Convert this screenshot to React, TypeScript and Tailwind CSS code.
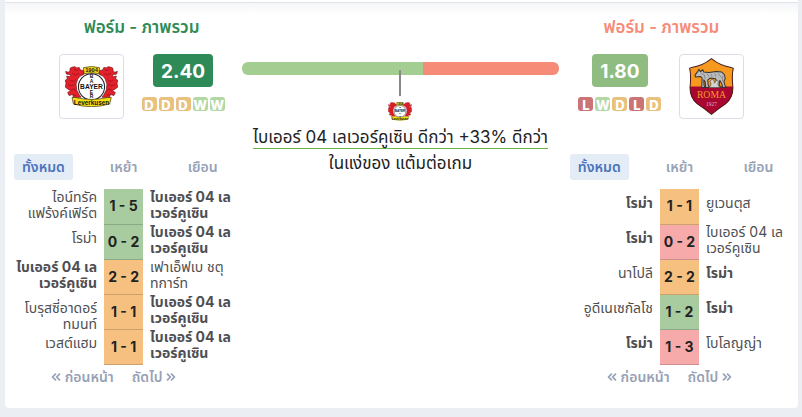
import React, { useState } from "react";
import { ChevronsLeft, ChevronsRight } from "lucide-react";
import { clsx } from "clsx";

type Result = "W" | "D" | "L";

interface Match {
  home: string;
  away: string;
  score: string;
  result: Result;
  strong?: "home" | "away";
  clipped?: boolean;
}

interface Team {
  title: string;
  titleClass: string;
  points: string;
  pointsClass: string;
  form: Result[];
  matches: Match[];
}

const LEV = "ไบเออร์ 04 เล\nเวอร์คูเซิน";

const leverkusen: Team = {
  title: "ฟอร์ม - ภาพรวม",
  titleClass: "text-[#2e8b57]",
  points: "2.40",
  pointsClass: "bg-[#2e8b57]",
  form: ["D", "D", "D", "W", "W"],
  matches: [
    { home: "ไอน์ทรัค\nแฟร้งค์เฟิร์ต", away: LEV, score: "1 - 5", result: "W", strong: "away" },
    { home: "โรม่า", away: LEV, score: "0 - 2", result: "W", strong: "away" },
    { home: LEV, away: "เฟาเอ็ฟเบ ชตุ\nทการ์ท", score: "2 - 2", result: "D", strong: "home" },
    { home: "โบรุสซี่อาดอร์\nทมนท์", away: LEV, score: "1 - 1", result: "D", strong: "away", clipped: true },
    { home: "เวสต์แฮม", away: LEV, score: "1 - 1", result: "D", strong: "away" },
  ],
};

const roma: Team = {
  title: "ฟอร์ม - ภาพรวม",
  titleClass: "text-[#f68b77]",
  points: "1.80",
  pointsClass: "bg-[#8fbc80]",
  form: ["L", "W", "D", "L", "D"],
  matches: [
    { home: "โรม่า", away: "ยูเวนตุส", score: "1 - 1", result: "D", strong: "home" },
    { home: "โรม่า", away: LEV, score: "0 - 2", result: "L", strong: "home" },
    { home: "นาโปลี", away: "โรม่า", score: "2 - 2", result: "D", strong: "away" },
    { home: "อูดีเนเซกัลโช", away: "โรม่า", score: "1 - 2", result: "W", strong: "away" },
    { home: "โรม่า", away: "โบโลญญ่า", score: "1 - 3", result: "L", strong: "home" },
  ],
};

const formColors: Record<Result, string> = {
  W: "bg-[#b3d8a4]",
  D: "bg-[#e9c07e]",
  L: "bg-[#cb7476]",
};

const scoreColors: Record<Result, string> = {
  W: "bg-[#a8cb9f] border-[#8caa85]",
  D: "bg-[#f6c180] border-[#cda16b]",
  L: "bg-[#f6abaa] border-[#cd8f8e]",
};

function Lion() {
  return (
    <g>
      <path
        d="M20 4 L29 2 L36 6 L42 4 L46 12 L57 14 L56 25 L45 30 L38 39 L33 54 L35 72 L42 85 L48 93 L25 94 L23 85 L12 88 L8 79 L17 73 L9 69 L1 63 L3 51 L0 43 L7 39 L5 30 L14 32 L17 26 L4 24 L2 16 L9 19 L15 15 L15 7 Z"
        fill="#e4202b"
        stroke="#721319"
        strokeWidth="2"
      />
      <path
        d="M26 10 L33 13 L40 12 M21 21 L31 27 L42 22 M14 42 L24 46 L32 40 M9 56 L20 59 L29 54 M18 73 L27 68 L34 76 M24 85 L33 88"
        fill="none"
        stroke="#85151c"
        strokeWidth="2"
      />
    </g>
  );
}

function LeverkusenLogo({ className }: { className?: string }) {
  return (
    <svg viewBox="0 0 158 123" className={className} role="img" aria-label="ไบเออร์ 04 เลเวอร์คูเซิน">
      <Lion />
      <g transform="translate(158 0) scale(-1 1)">
        <Lion />
      </g>
      <circle cx="79" cy="62" r="39" fill="#fff" stroke="#1a1a1a" strokeWidth="3" />
      <path d="M55 5 Q79 -2 103 5 L101 23 Q79 17 57 23 Z" fill="#f8df16" stroke="#3a3200" strokeWidth="2" />
      <path d="M21 94 L31 94 Q79 105 127 94 L138 94 L133 113 Q79 130 25 113 Z" fill="#f8df16" stroke="#3a3200" strokeWidth="2" />
      <g fontFamily="Liberation Sans, sans-serif" fontWeight="bold" textAnchor="middle" fill="#111">
        <text x="79" y="17" fontSize="17">1904</text>
        <text x="79" y="68" fontSize="20">BAYER</text>
        <text x="79" y="37" fontSize="15">B</text>
        <text x="79" y="51" fontSize="15">A</text>
        <text x="79" y="82" fontSize="15">E</text>
        <text x="79" y="96" fontSize="15">R</text>
        <text x="79" y="116" fontSize="19">Leverkusen</text>
      </g>
    </svg>
  );
}

function RomaLogo({ className }: { className?: string }) {
  return (
    <svg viewBox="0 0 134 170" className={className} role="img" aria-label="โรม่า">
      <path d="M67 2 Q40 24 8 28 L2 31 Q7 54 3 88 Q3 119 25 137 Q46 151 67 168 Q88 151 109 137 Q131 119 131 88 Q127 54 132 31 L126 28 Q94 24 67 2 Z" fill="#f7991f" />
      <path d="M3 85 L131 85 Q132 119 109 137 Q88 151 67 168 Q46 151 25 137 Q2 119 3 85 Z" fill="#a90632" />
      <path d="M67 2 Q40 24 8 28 L2 31 Q7 54 3 88 Q3 119 25 137 Q46 151 67 168 Q88 151 109 137 Q131 119 131 88 Q127 54 132 31 L126 28 Q94 24 67 2 Z" fill="none" stroke="#4a1a19" strokeWidth="3" />
      <path
        d="M18 51 L24 43 L30 34 L34 41 L41 35 L44 42 L59 43 L81 40 L98 42 L106 50 L108 62 L104 70 L108 84 L112 88 L101 88 L97 75 L92 67 L90 79 L94 88 L83 88 L84 73 L79 62 L63 60 L56 65 L57 80 L61 88 L50 88 L48 70 L44 65 L45 82 L48 88 L38 88 L39 59 L34 55 L19 57 Z"
        fill="#b9bbbe"
        stroke="#35302e"
        strokeWidth="3"
        strokeLinejoin="round"
      />
      <path d="M36 46 L46 51 L48 62 M54 47 L60 55 M66 47 L69 56 M77 46 L80 56 M88 46 L97 59 M101 52 L100 69" stroke="#77726f" strokeWidth="2" fill="none" />
      <path d="M61 88 L66 78 L63 69 L69 63 L75 67 L76 75 L82 66 L88 70 L86 78 L91 88 Z" fill="#d2d2cf" stroke="#55504d" strokeWidth="2" />
      <g fontFamily="Liberation Serif, serif" textAnchor="middle">
        <text x="67" y="118" fontSize="29" fill="#f7991f">ROMA</text>
        <text x="67" y="143" fontSize="16" fill="#dcbcc0">1927</text>
      </g>
    </svg>
  );
}

function LogoBox({ children }: { children: React.ReactNode }) {
  return (
    <div className="flex size-[65px] shrink-0 items-center justify-center rounded border border-[#dcdde8]">
      {children}
    </div>
  );
}

function FormSummary({ team }: { team: Team }) {
  return (
    <div className="flex flex-col items-center">
      <span
        className={clsx(
          "flex h-[33px] items-center rounded px-2 pt-1 text-[19px] font-bold text-white",
          team.pointsClass
        )}
      >
        {team.points}
      </span>
      <div className="mt-[10px] flex gap-[2px]">
        {team.form.map((result, i) => (
          <span
            key={i}
            className={clsx(
              "flex h-[14px] w-[15px] items-center justify-center rounded-[3px] pt-[2px] text-[13px] leading-none font-extrabold text-white",
              formColors[result]
            )}
          >
            {result}
          </span>
        ))}
      </div>
    </div>
  );
}

function TeamCell({ name, strong, clipped }: { name: string; strong: boolean; clipped?: boolean }) {
  const single = !name.includes("\n");
  return (
    <div
      className={clsx(
        "h-[35px] overflow-hidden text-sm leading-4 whitespace-pre text-[#4f4f52]",
        strong && "font-bold",
        (single || clipped) && "pt-[6px]"
      )}
    >
      {name}
    </div>
  );
}

const tabs = ["ทั้งหมด", "เหย้า", "เยือน"];

function MatchHistory({ team }: { team: Team }) {
  const [active, setActive] = useState(0);

  return (
    <div>
      <div className="grid grid-cols-3 text-sm font-semibold">
        {tabs.map((tab, i) => (
          <div key={tab} className={clsx("flex", i > 0 && "justify-center", i === 2 && "pl-3")}>
            <button
              onClick={() => setActive(i)}
              className={clsx(
                "h-[26px] rounded-[3px] px-2",
                active === i ? "bg-[#e4ecf6] text-[#4b74bd]" : "text-[#98a2b6]"
              )}
            >
              {tab}
            </button>
          </div>
        ))}
      </div>
      <table className="mt-[9px] w-full table-fixed border-collapse">
        <tbody>
          {team.matches.map((match, i) => (
            <tr key={i} className="h-[35px]">
              <td className="p-0 pr-[7px] text-right align-top">
                <div className="flex justify-end">
                  <TeamCell name={match.home} strong={match.strong === "home"} clipped={match.clipped} />
                </div>
              </td>
              <td
                className={clsx(
                  "w-[39px] border-b p-0 text-center text-sm font-bold whitespace-nowrap text-[#222]",
                  scoreColors[match.result]
                )}
              >
                {match.score}
              </td>
              <td className="p-0 pl-[7px] align-top">
                <TeamCell name={match.away} strong={match.strong === "away"} />
              </td>
            </tr>
          ))}
        </tbody>
      </table>
      <div className="mt-[2px] flex justify-center gap-[18px] pr-5 text-sm font-semibold text-[#98a2b6]">
        <button className="flex items-center gap-[2px]">
          <ChevronsLeft className="size-[14px]" strokeWidth={3} />
          ก่อนหน้า
        </button>
        <button className="flex items-center gap-[2px]">
          ถัดไป
          <ChevronsRight className="size-[14px]" strokeWidth={3} />
        </button>
      </div>
    </div>
  );
}

export default function App() {
  return (
    <div className="min-h-screen bg-[#ebeff3] pr-1 pb-2 pl-[5px] font-[Inter,'Noto_Sans_Thai','Noto_Sans',sans-serif]">
      <div className="h-[3px] border-b border-[#e0e3ec] bg-white" />
      <main className="rounded-b bg-white bg-linear-to-b from-[#f5f6f8] to-white to-[12px] px-[9px] pb-[21px]">
        <div className="grid grid-cols-[11fr_16fr_11fr] gap-[9px]">
          <section>
            <div className="h-[151px] pt-3 pl-9">
              <h2 className={clsx("text-center text-[17px] leading-6 font-semibold", leverkusen.titleClass)}>
                {leverkusen.title}
              </h2>
              <div className="mt-[15px] flex justify-center gap-[18px]">
                <LogoBox>
                  <LeverkusenLogo className="w-[53px]" />
                </LogoBox>
                <FormSummary team={leverkusen} />
              </div>
            </div>
            <MatchHistory team={leverkusen} />
          </section>

          <section className="flex flex-col items-center pt-[59px] pr-[2px]">
            <div className="flex h-[13px] w-full overflow-hidden rounded-md">
              <div className="w-[57%] bg-[#a3cd91]" />
              <div className="flex-1 bg-[#f68c78]" />
            </div>
            <div className="relative -mt-[5px] h-[26px] w-[2px] bg-[#888]" />
            <LeverkusenLogo className="mt-[6px] w-6" />
            <div className="mt-[6px] flex flex-col items-center text-[17px] whitespace-nowrap text-[#222]">
              <p className="border-b border-[#6fb544] leading-[21px]">ไบเออร์ 04 เลเวอร์คูเซิน ดีกว่า +33% ดีกว่า</p>
              <p className="mt-[2px] leading-[25px]">ในแง่ของ แต้มต่อเกม</p>
            </div>
          </section>

          <section>
            <div className="h-[151px] pt-3 pr-9">
              <h2 className={clsx("text-center text-[17px] leading-6 font-semibold", roma.titleClass)}>{roma.title}</h2>
              <div className="mt-[15px] flex justify-center gap-[18px]">
                <FormSummary team={roma} />
                <LogoBox>
                  <RomaLogo className="h-[57px]" />
                </LogoBox>
              </div>
            </div>
            <MatchHistory team={roma} />
          </section>
        </div>
      </main>
    </div>
  );
}
